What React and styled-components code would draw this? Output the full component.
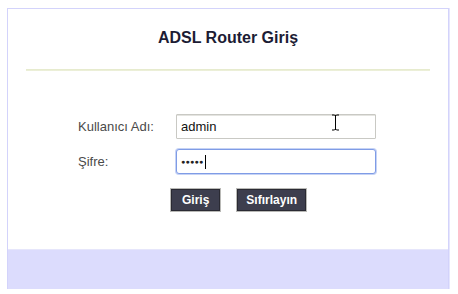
import React from "react";
import styled, { createGlobalStyle } from "styled-components";

const Global = createGlobalStyle`
  html, body { margin: 0; padding: 0; background: #ffffff; }
  body { font-family: "Liberation Sans", Arial, sans-serif; }
`;

const Page = styled.div`
  width: 458px;
  height: 294px;
  box-sizing: border-box;
  padding: 8px 9px 5px 7px;
  position: relative;
`;

const Card = styled.div`
  height: 100%;
  box-sizing: border-box;
  border: 1px solid #d3d3fb;
  border-bottom: none;
  box-shadow: 1px 0 0 #e6e6fd;
  display: flex;
  flex-direction: column;
  background: #ffffff;
`;

const Title = styled.h1`
  margin: 19px 0 0;
  font-size: 16px;
  line-height: 20px;
  font-weight: bold;
  text-align: center;
  color: #1c1c34;
`;

const Divider = styled.div`
  margin: 21px 18px 0;
  height: 2px;
  background: linear-gradient(#e4e9c9, #eef1dc);
`;

const Form = styled.div`
  margin-top: 43px;
  display: grid;
  grid-template-columns: 98px 200px;
  row-gap: 10px;
  justify-content: start;
  padding-left: 70px;
`;

const Label = styled.label`
  font-size: 13px;
  color: #4a4a4a;
  line-height: 25px;
`;

const Field = styled.div`
  position: relative;
  height: 25px;
  box-sizing: border-box;
  border: 1px solid ${(p) => (p.$focused ? "#7f9ce6" : "#c9c9c4")};
  border-radius: ${(p) => (p.$focused ? "3px" : "1px")};
  box-shadow: ${(p) => (p.$focused ? "0 0 0 1px #c6d3f5" : "inset 0 1px 0 #e4e4e0")};
  background: #fff;
  display: flex;
  align-items: center;
  padding-left: 4px;
  font-size: 13px;
  color: #111;
`;

const Dots = styled.span`
  font-size: 7px;
  letter-spacing: 0.3px;
  color: #222;
  line-height: 1;
`;

const Caret = styled.span`
  display: inline-block;
  width: 1px;
  height: 14px;
  background: #000;
  margin-left: 1px;
`;

const Beam = styled.svg`
  position: absolute;
  left: 331px;
  top: 114px;
`;

const Buttons = styled.div`
  margin-top: 15px;
  display: flex;
  gap: 17px;
  padding-left: 163px;
`;

const Button = styled.button`
  height: 22px;
  box-sizing: border-box;
  padding: 0 ${(p) => p.$pad}px;
  background: #3d3e4e;
  border: 1px solid #2a2a33;
  box-shadow: 0 0 0 1px #b9b9b6;
  color: #ffffff;
  font-family: "Liberation Sans", Arial, sans-serif;
  font-weight: bold;
  font-size: 12px;
  line-height: 20px;
  border-radius: 0;
  cursor: pointer;
`;

const Footer = styled.div`
  margin-top: auto;
  height: 39px;
  background: #dcdcfd;
  border-top: 1px solid #e6e6fb;
`;

export default function App() {
  return (
    <>
      <Global />
      <Page>
        <Card>
          <Title>ADSL Router Giriş</Title>
          <Divider />
          <Form>
            <Label>Kullanıcı Adı:</Label>
            <Field>admin</Field>
            <Label>Şifre:</Label>
            <Field $focused>
              <Dots>●●●●●</Dots>
              <Caret />
            </Field>
          </Form>
          <Buttons>
            <Button $pad={10}>Giriş</Button>
            <Button $pad={8}>Sıfırlayın</Button>
          </Buttons>
          <Footer />
        </Card>
        <Beam width="9" height="17" viewBox="0 0 9 17">
          <path d="M1 1h2.5M5.5 1H8M4.5 1.5v14M1 16h2.5M5.5 16H8M3.5 1.5h2M3.5 15.5h2" stroke="#000" strokeWidth="1" fill="none" />
        </Beam>
      </Page>
    </>
  );
}
